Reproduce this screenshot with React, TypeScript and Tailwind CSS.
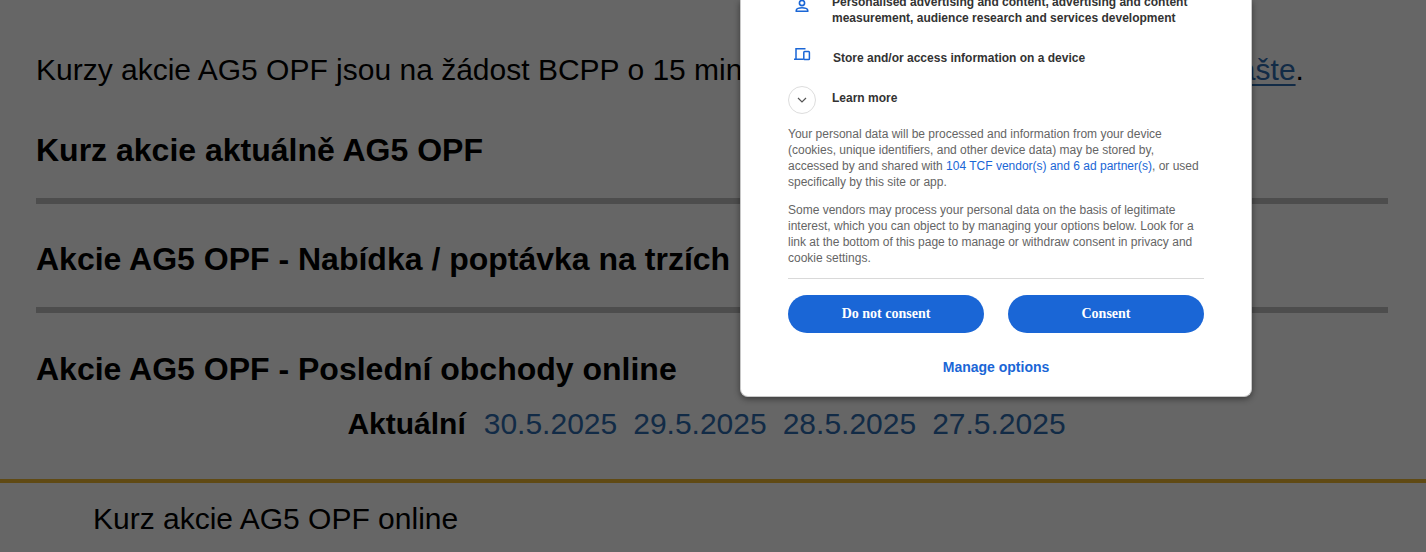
export default function App() {
  const arial = "font-['Liberation_Sans',Arial,sans-serif]";
  return (
    <div className={`relative h-[552px] w-[1426px] overflow-hidden bg-white text-black ${arial}`}>
      <div className="px-[36px] pt-[50px]">
        <p className="h-[40px] whitespace-nowrap text-[30px] leading-[40px]">
          Kurzy akcie AG5 OPF jsou na žádost BCPP o 15 minut zpožděny, aktuální kurz ověříte na{" "}
          <a className="text-[#2f6cb0] underline decoration-2 underline-offset-4">ašte</a>.
        </p>
        <h2 className="mt-[40px] text-[32px] font-bold leading-[40px]">Kurz akcie aktuálně AG5 OPF</h2>
        <div className="mr-[2px] mt-[28px] h-[6px] bg-[#c0c0c0]" />
        <h2 className="mt-[35px] text-[32px] font-bold leading-[40px]">Akcie AG5 OPF - Nabídka / poptávka na trzích</h2>
        <div className="mr-[2px] mt-[28px] h-[6px] bg-[#c0c0c0]" />
        <h2 className="mt-[36px] text-[32px] font-bold leading-[40px]">Akcie AG5 OPF - Poslední obchody online</h2>
        <div className="mt-[15px] flex justify-center gap-[16px] pr-[13px] text-[30px] leading-[40px] text-[#2f6cb0]">
          <b className="mr-[2px] text-black">Aktuální</b>
          <span>30.5.2025</span>
          <span>29.5.2025</span>
          <span>28.5.2025</span>
          <span>27.5.2025</span>
        </div>
      </div>
      <div className="mt-[35px] h-[4px] bg-[#f0b932]" />
      <p className="pl-[93px] pt-[16px] text-[30px] leading-[40px]">Kurz akcie AG5 OPF online</p>

      <div className="absolute inset-0 bg-black opacity-60" />

      <div className="absolute left-[740px] top-0 flex h-[397px] w-[512px] flex-col justify-end overflow-hidden rounded-b-[8px] border border-t-0 border-[#c8c8c8] bg-white px-[47px] pb-[19px] shadow-[0_2px_6px_rgba(0,0,0,0.45)]">
        <div className="flex h-[46px] items-start text-[#333]">
          <svg className="ml-[6px] h-[16px] w-[16px] shrink-0" viewBox="0 0 16 16" fill="none" stroke="#1a66d6" strokeWidth="1.6">
            <circle cx="8" cy="3" r="2.6" />
            <path d="M2.3 11.2v-1c0-1.4 2.8-2.5 5.7-2.5s5.7 1.1 5.7 2.5v1z" />
          </svg>
          <p className="ml-[22px] mt-[-6px] text-[12px] font-bold leading-[16px]">
            Personalised advertising and content, advertising and content
            <br />
            measurement, audience research and services development
          </p>
        </div>
        <div className="mt-[4px] flex h-[36px] items-start text-[#333]">
          <svg className="ml-[5px] mt-[-4px] h-[18px] w-[18px] shrink-0" viewBox="0 0 18 18" fill="none" stroke="#1a66d6" strokeWidth="1.5">
            <path d="M3 13V2.8h9.5M1 13.2h9.5" />
            <rect x="10.8" y="5.6" width="5.6" height="8" rx="0.8" />
          </svg>
          <p className="ml-[22px] text-[12px] font-bold leading-[16px]">Store and/or access information on a device</p>
        </div>
        <div className="flex h-[28px] items-start text-[#333]">
          <span className="flex h-[28px] w-[28px] shrink-0 items-center justify-center rounded-full border border-[#ddd]">
            <svg className="h-[10px] w-[10px]" viewBox="0 0 10 10" fill="none" stroke="#555" strokeWidth="1.2">
              <path d="M1 3l4 4 4-4" />
            </svg>
          </span>
          <p className="ml-[16px] mt-[4px] text-[12px] font-bold leading-[16px]">Learn more</p>
        </div>
        <p className="mt-[12px] text-[12px] leading-[16px] text-[#656565]">
          Your personal data will be processed and information from your device
          <br />
          (cookies, unique identifiers, and other device data) may be stored by,
          <br />
          accessed by and shared with <span className="text-[#1a66d6]">104 TCF vendor(s) and 6 ad partner(s)</span>, or used
          <br />
          specifically by this site or app.
        </p>
        <p className="mt-[12px] text-[12px] leading-[16px] text-[#656565]">
          Some vendors may process your personal data on the basis of legitimate
          <br />
          interest, which you can object to by managing your options below. Look for a
          <br />
          link at the bottom of this page to manage or withdraw consent in privacy and
          <br />
          cookie settings.
        </p>
        <div className="mt-[12px] h-px bg-[#d9d9d9]" />
        <div className="mt-[16px] flex gap-[24px]">
          <button className="h-[38px] flex-1 rounded-full bg-[#1a66d6] pb-px font-['Liberation_Serif',serif] text-[14px] font-bold text-white">Do not consent</button>
          <button className="h-[38px] flex-1 rounded-full bg-[#1a66d6] pb-px font-['Liberation_Serif',serif] text-[14px] font-bold text-white">Consent</button>
        </div>
        <p className="mt-[24px] text-center text-[14px] font-bold leading-[20px] text-[#1a66d6]">Manage options</p>
      </div>
    </div>
  );
}
